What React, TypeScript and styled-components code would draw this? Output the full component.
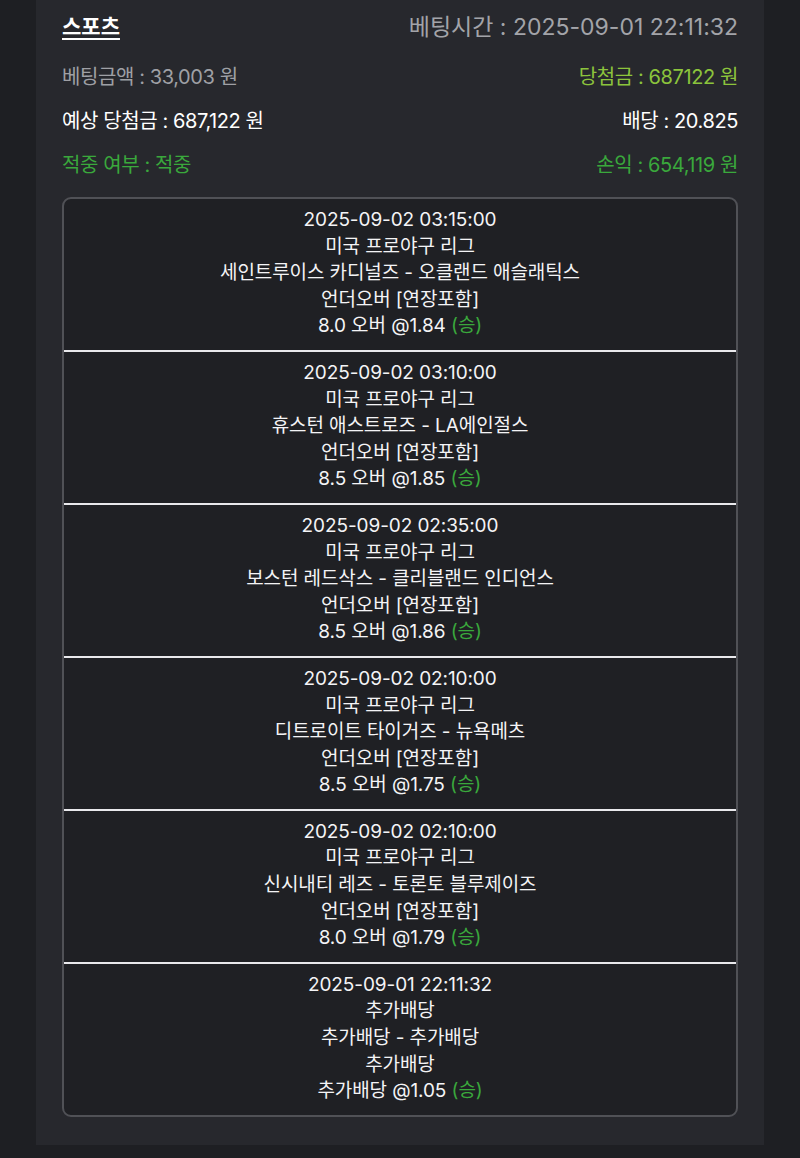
import React from "react";
import styled, { createGlobalStyle } from "styled-components";

type Bet = {
  time: string;
  league: string;
  match: string;
  market: string;
  pick: string;
  odds: string;
  result: string;
};

const bets: Bet[] = [
  {
    time: "2025-09-02 03:15:00",
    league: "미국 프로야구 리그",
    match: "세인트루이스 카디널즈 - 오클랜드 애슬래틱스",
    market: "언더오버 [연장포함]",
    pick: "8.0 오버",
    odds: "1.84",
    result: "승",
  },
  {
    time: "2025-09-02 03:10:00",
    league: "미국 프로야구 리그",
    match: "휴스턴 애스트로즈 - LA에인절스",
    market: "언더오버 [연장포함]",
    pick: "8.5 오버",
    odds: "1.85",
    result: "승",
  },
  {
    time: "2025-09-02 02:35:00",
    league: "미국 프로야구 리그",
    match: "보스턴 레드삭스 - 클리블랜드 인디언스",
    market: "언더오버 [연장포함]",
    pick: "8.5 오버",
    odds: "1.86",
    result: "승",
  },
  {
    time: "2025-09-02 02:10:00",
    league: "미국 프로야구 리그",
    match: "디트로이트 타이거즈 - 뉴욕메츠",
    market: "언더오버 [연장포함]",
    pick: "8.5 오버",
    odds: "1.75",
    result: "승",
  },
  {
    time: "2025-09-02 02:10:00",
    league: "미국 프로야구 리그",
    match: "신시내티 레즈 - 토론토 블루제이즈",
    market: "언더오버 [연장포함]",
    pick: "8.0 오버",
    odds: "1.79",
    result: "승",
  },
  {
    time: "2025-09-01 22:11:32",
    league: "추가배당",
    match: "추가배당 - 추가배당",
    market: "추가배당",
    pick: "추가배당",
    odds: "1.05",
    result: "승",
  },
];

const GlobalStyle = createGlobalStyle`
  html, body {
    margin: 0;
    padding: 0;
    background: #1e1f23;
  }
  body {
    font-family: Inter, "Noto Sans CJK KR", sans-serif;
    color: #f2f2f4;
  }
`;

const Page = styled.div`
  min-height: 1158px;
  background: #1e1f23;
`;

const Panel = styled.section`
  margin: 0 36px;
  padding: 7px 26px 28px;
  background: #27282d;
`;

const TopRow = styled.div`
  display: flex;
  justify-content: space-between;
  align-items: center;
  height: 36px;
  margin-bottom: 10px;
`;

const Title = styled.h2`
  margin: 0;
  font-size: 21px;
  font-weight: 600;
  text-decoration: underline;
  text-underline-offset: 4px;
  color: #ffffff;
`;

const BetTime = styled.span`
  font-size: 23px;
  color: #a3a4a9;
  letter-spacing: 0;
`;

const InfoRow = styled.div`
  display: flex;
  justify-content: space-between;
  align-items: center;
  height: 44px;
`;

const Info = styled.span<{ $tone?: "gray" | "white" | "lime" | "green" }>`
  font-size: 20px;
  letter-spacing: -0.4px;
  color: ${({ $tone }) =>
    $tone === "gray"
      ? "#9fa0a5"
      : $tone === "lime"
      ? "#8cc43c"
      : $tone === "green"
      ? "#3aa83c"
      : "#ffffff"};
`;

const BetBox = styled.div`
  margin-top: 12px;
  border: 2px solid #505156;
  border-radius: 9px;
  background: #1f2024;
  overflow: hidden;
`;

const BetItem = styled.div`
  padding: 8px 0 10px;
  text-align: center;
  font-size: 19px;
  line-height: 26.6px;
  letter-spacing: -0.1px;
  color: #f4f4f6;
  border-bottom: 2px solid #e9e9ec;
  &:last-child {
    border-bottom: none;
  }
`;

const Line = styled.div``;

const Result = styled.span`
  color: #3aa83c;
`;

export default function App() {
  return (
    <Page>
      <GlobalStyle />
      <Panel>
        <TopRow>
          <Title>스포츠</Title>
          <BetTime>베팅시간 : 2025-09-01 22:11:32</BetTime>
        </TopRow>
        <InfoRow>
          <Info $tone="gray">베팅금액 : 33,003 원</Info>
          <Info $tone="lime">당첨금 : 687122 원</Info>
        </InfoRow>
        <InfoRow>
          <Info>예상 당첨금 : 687,122 원</Info>
          <Info>배당 : 20.825</Info>
        </InfoRow>
        <InfoRow>
          <Info $tone="green">적중 여부 : 적중</Info>
          <Info $tone="green">손익 : 654,119 원</Info>
        </InfoRow>
        <BetBox>
          {bets.map((bet, i) => (
            <BetItem key={i}>
              <Line>{bet.time}</Line>
              <Line>{bet.league}</Line>
              <Line>{bet.match}</Line>
              <Line>{bet.market}</Line>
              <Line>
                {bet.pick} @{bet.odds} <Result>({bet.result})</Result>
              </Line>
            </BetItem>
          ))}
        </BetBox>
      </Panel>
    </Page>
  );
}
